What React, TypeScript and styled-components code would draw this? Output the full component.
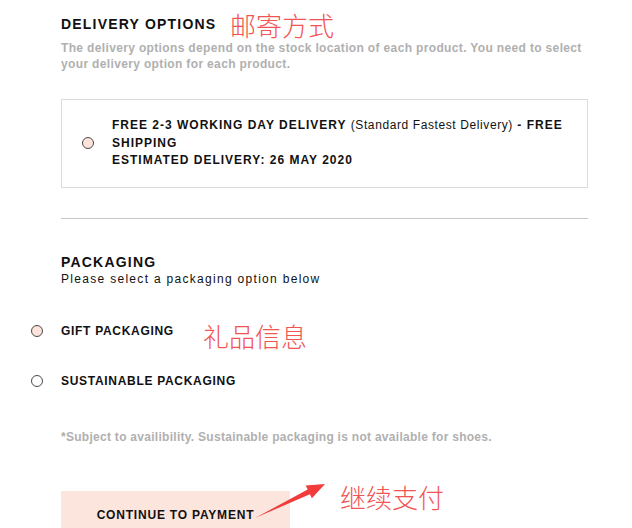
import React from 'react'
import styled, { createGlobalStyle } from 'styled-components'

const GlobalStyle = createGlobalStyle`
  html, body {
    margin: 0;
    padding: 0;
    background: #fff;
  }
  body {
    font-family: 'Liberation Sans', Arial, sans-serif;
    color: #111;
  }
`

const Page = styled.div`
  position: relative;
  width: 632px;
  height: 528px;
  overflow: hidden;
  box-sizing: border-box;
  padding: 15px 44px 0 61px;
`

const Heading = styled.h2`
  margin: 0;
  font-size: 14px;
  line-height: 18px;
  font-weight: 700;
  letter-spacing: 1.2px;
  color: #111;
`

const Hint = styled.p<{ $top?: number; $spacing?: number }>`
  margin: ${(p) => p.$top ?? 0}px 0 0;
  font-size: 12px;
  line-height: 16px;
  font-weight: 700;
  letter-spacing: ${(p) => p.$spacing ?? 0.35}px;
  color: #b0b0b0;
`

const Subtitle = styled.p`
  margin: 0;
  font-size: 12px;
  line-height: 16px;
  letter-spacing: 1.3px;
  color: #111;
`

const DeliveryBox = styled.label`
  margin-top: 27px;
  display: flex;
  align-items: center;
  gap: 18px;
  border: 1px solid #dcdcdc;
  padding: 17px 10px 17px 20px;
`

const Radio = styled.span<{ $checked?: boolean }>`
  flex: none;
  width: 10px;
  height: 10px;
  border-radius: 50%;
  border: 1px solid #4a4a4a;
  background: ${(p) => (p.$checked ? '#fde3d9' : '#fff')};
`

const OptionText = styled.div`
  font-size: 12px;
  line-height: 17.5px;
  font-weight: 700;
  letter-spacing: 1px;

  span {
    font-weight: 400;
    letter-spacing: 0.6px;
  }
`

const Divider = styled.hr`
  margin: 30.5px 0 34px;
  border: none;
  border-top: 1px solid #c6c6c6;
`

const OptionList = styled.div`
  margin: 36px 0 0 -30px;
  display: flex;
  flex-direction: column;
  gap: 34px;
`

const OptionRow = styled.label`
  display: flex;
  align-items: center;
  gap: 18px;
  font-size: 12px;
  line-height: 16px;
  font-weight: 700;
  letter-spacing: 0.7px;
`

const PayButton = styled.button`
  margin-top: 46px;
  display: block;
  width: 229px;
  height: 48px;
  border: none;
  background: #fce5dc;
  font-family: 'Liberation Sans', Arial, sans-serif;
  font-size: 12px;
  font-weight: 700;
  letter-spacing: 0.8px;
  color: #111;
  padding: 0;
  cursor: pointer;
`

const Note = styled.div<{ $left: number; $top: number }>`
  position: absolute;
  left: ${(p) => p.$left}px;
  top: ${(p) => p.$top}px;
  font-family: 'Noto Sans CJK SC', sans-serif;
  font-size: 26px;
  line-height: 30px;
  font-weight: 300;
  color: #f25454;
  white-space: nowrap;
`

const ArrowSvg = styled.svg`
  position: absolute;
  left: 250px;
  top: 478px;
`

export default function App() {
  return (
    <>
      <GlobalStyle />
      <Page>
        <Heading>DELIVERY OPTIONS</Heading>
        <Hint $top={7}>
          The delivery options depend on the stock location of each product. You need to select
          your delivery option for each product.
        </Hint>

        <DeliveryBox>
          <Radio $checked />
          <OptionText>
            FREE 2-3 WORKING DAY DELIVERY <span>(Standard Fastest Delivery)</span> - FREE SHIPPING
            <br />
            ESTIMATED DELIVERY: 26 MAY 2020
          </OptionText>
        </DeliveryBox>

        <Divider />

        <Heading>PACKAGING</Heading>
        <Subtitle>Please select a packaging option below</Subtitle>

        <OptionList>
          <OptionRow>
            <Radio $checked />
            GIFT PACKAGING
          </OptionRow>
          <OptionRow>
            <Radio />
            SUSTAINABLE PACKAGING
          </OptionRow>
        </OptionList>

        <Hint $top={40} $spacing={0.28}>
          *Subject to availibility. Sustainable packaging is not available for shoes.
        </Hint>

        <PayButton>CONTINUE TO PAYMENT</PayButton>

        {/* red callouts */}
        <Note $left={230} $top={10}>邮寄方式</Note>
        <Note $left={203} $top={321}>礼品信息</Note>
        <Note $left={340} $top={482}>继续支付</Note>
        <ArrowSvg width="80" height="45" viewBox="0 0 80 45">
          <polygon
            points="5,40 59.9,16.2 61.9,20.2 75,6 55.7,7.6 57.7,11.6"
            fill="#f23b3b"
          />
        </ArrowSvg>
      </Page>
    </>
  )
}
